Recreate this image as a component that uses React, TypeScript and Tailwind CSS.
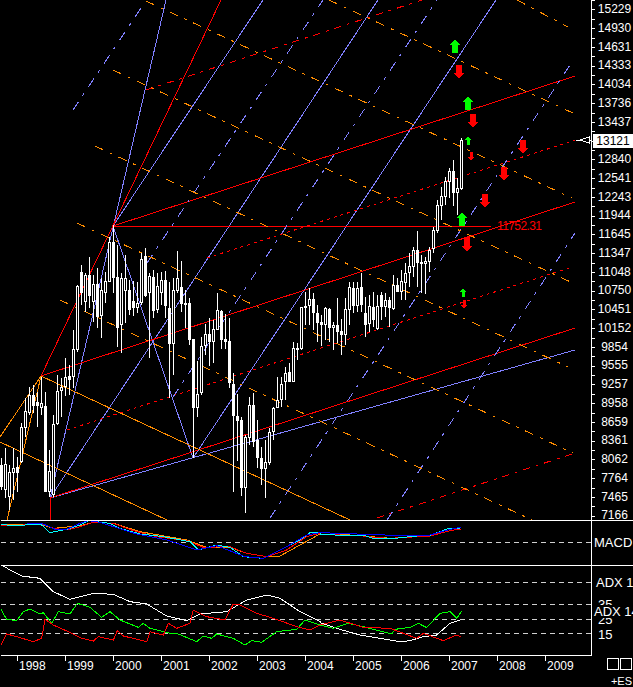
// App.tsx - monthly index chart with Gann-style fan lines, MACD and ADX panels
const ORANGE = '#ff8c00';
const BLUE = '#8080ff';
const RED = '#ff0000';
const GREEN = '#00ff00';

// [high, bodyTop, bodyBottom, low, filled]
const CANDLES: [number, number, number, number, number][] = [
    [458, 465, 487, 490, 1], [448, 464, 490, 498, 0], [465, 472, 497, 510, 0], [448, 468, 473, 500, 0],
    [457, 467, 473, 492, 1], [423, 427, 462, 463, 0], [398, 411, 428, 437, 0], [387, 395, 413, 415, 0],
    [385, 395, 406, 413, 1], [392, 402, 406, 427, 1], [377, 403, 408, 415, 0], [392, 406, 492, 492, 1],
    [450, 471, 492, 497, 0], [415, 424, 495, 497, 0], [375, 391, 424, 425, 0], [378, 387, 391, 417, 0],
    [358, 377, 387, 396, 0], [365, 376, 380, 395, 1], [330, 349, 377, 388, 0], [285, 286, 350, 352, 0],
    [265, 272, 293, 305, 1], [273, 275, 302, 312, 0], [257, 275, 296, 308, 1], [275, 284, 302, 322, 0],
    [268, 284, 317, 328, 1], [278, 290, 316, 338, 0], [272, 281, 293, 303, 0], [237, 242, 282, 282, 0],
    [225, 242, 278, 293, 1], [245, 277, 328, 347, 1], [273, 278, 325, 353, 0], [255, 278, 291, 323, 0],
    [280, 290, 310, 315, 1], [281, 301, 308, 316, 1], [282, 303, 308, 313, 0], [253, 259, 303, 305, 0],
    [248, 256, 296, 297, 1], [273, 276, 293, 358, 0], [270, 277, 311, 318, 1], [273, 286, 310, 313, 0],
    [272, 280, 293, 305, 0], [271, 280, 306, 318, 1], [282, 308, 344, 398, 1], [278, 290, 344, 375, 0],
    [251, 278, 291, 293, 0], [261, 287, 304, 312, 1], [290, 303, 305, 328, 1], [298, 303, 340, 345, 1],
    [340, 339, 408, 458, 1], [361, 394, 408, 417, 0], [337, 346, 393, 395, 0], [324, 334, 346, 355, 0],
    [318, 334, 342, 366, 1], [320, 329, 342, 363, 0], [293, 310, 330, 330, 0], [310, 311, 340, 349, 1],
    [314, 339, 342, 349, 1], [318, 341, 383, 388, 1], [373, 384, 416, 492, 1], [394, 416, 421, 461, 1],
    [417, 420, 488, 496, 1], [435, 437, 488, 513, 0], [397, 405, 438, 445, 0], [393, 405, 442, 447, 1],
    [420, 440, 458, 468, 1], [447, 458, 469, 485, 1], [440, 462, 469, 498, 0], [428, 432, 463, 465, 0],
    [407, 408, 432, 440, 0], [377, 400, 408, 408, 0], [377, 384, 400, 407, 0], [367, 373, 382, 400, 0],
    [363, 372, 382, 382, 1], [342, 348, 382, 382, 0], [343, 348, 350, 360, 1], [307, 307, 349, 350, 0],
    [292, 306, 308, 325, 0], [288, 299, 306, 325, 0], [293, 299, 313, 330, 1], [305, 313, 323, 342, 1],
    [315, 322, 325, 346, 1], [307, 308, 325, 340, 0], [308, 309, 328, 342, 1], [322, 325, 328, 350, 0],
    [298, 325, 332, 343, 1], [319, 331, 335, 355, 1], [298, 309, 335, 345, 0], [282, 287, 310, 325, 0],
    [282, 288, 306, 313, 1], [282, 288, 306, 312, 0], [273, 287, 305, 312, 1], [297, 313, 325, 337, 1],
    [295, 306, 324, 332, 0], [292, 307, 320, 327, 1], [295, 306, 329, 330, 0], [292, 295, 307, 320, 1],
    [293, 300, 307, 317, 0], [297, 300, 308, 327, 1], [275, 285, 309, 310, 0], [278, 285, 292, 292, 1],
    [270, 281, 292, 300, 0], [263, 273, 283, 300, 0], [253, 266, 273, 287, 0], [247, 250, 267, 277, 0],
    [231, 250, 263, 287, 1], [255, 262, 264, 293, 1], [257, 261, 264, 294, 0], [247, 250, 262, 272, 0],
    [227, 230, 249, 253, 0], [200, 205, 231, 233, 0], [187, 196, 206, 220, 0], [177, 181, 197, 205, 0],
    [168, 171, 182, 198, 0], [160, 171, 193, 206, 1], [178, 188, 193, 215, 0], [138, 140, 189, 190, 0],
];

const SOLID: [number, number, number, number, string][] = [
    [50, 498, 166, 0, BLUE], [50, 498, 378, 0, BLUE], [113, 226, 263, 0, BLUE], [113, 226, 193, 458, BLUE],
    [193, 458, 496, 0, BLUE], [50, 498, 575, 350, BLUE],
    [41, 376, 221, 0, RED], [50, 498, 575, 328, RED], [113, 226, 575, 76, RED], [41, 376, 575, 202, RED],
    [50, 498, 50, 520, RED], [113, 226, 491, 226, RED],
    [41, 376, 350, 520, ORANGE], [0, 442, 167, 520, ORANGE], [41, 376, 7, 520, ORANGE], [41, 376, 0, 437, ORANGE],
];

const DASHED: [number, number, number, number, string, string][] = [
    [146, 90, 422, 0, RED, '7 6 3 6'], [207, 258, 560, 145, RED, '3 4'], [560, 145, 575, 140, RED, '3 4'],
    [67, 430, 572, 267, RED, '3 4'], [377, 518, 575, 453, RED, '7 6 3 6'],
    [73, 110, 143, 5, BLUE, '10 7 3 8'], [147, 263, 323, 0, BLUE, '10 7 3 8'], [173, 397, 437, 0, BLUE, '10 7 3 8'],
    [387, 520, 575, 233, BLUE, '10 7 3 8'], [270, 518, 572, 62, BLUE, '10 7 3 8'],
    [517, 0, 568, 27, ORANGE, '9 7 3 7'], [329, 0, 575, 114, ORANGE, '9 7 3 7'], [146, 1, 572, 198, ORANGE, '9 7 3 7'],
    [113, 70, 575, 284, ORANGE, '9 7 3 7'], [95, 146, 568, 367, ORANGE, '9 7 3 7'], [77, 223, 573, 453, ORANGE, '9 7 3 7'],
    [60, 300, 532, 520, ORANGE, '9 7 3 7'],
];

// cx, top, height, up
const ARROWS: [number, number, number, boolean][] = [
    [455, 39, 14, true], [459, 65, 14, false], [468, 96, 14, true], [473, 114, 14, false],
    [468, 136, 9, true], [471, 152, 9, false], [523, 140, 14, false], [504, 167, 14, false],
    [485, 194, 14, false], [462, 212, 14, true], [467, 237, 15, false], [463, 288, 9, true], [464, 300, 9, false],
];

const PRICE_LABELS = [
    '15229', '14930', '14631', '14333', '14034', '13736', '13437', '13121', '12840', '12541', '12243', '11944', '11645', '11347',
    '11048', '10750', '10451', '10152', '9854', '9555', '9257', '8958', '8659', '8361', '8062', '7764', '7465', '7166',
];
const YEARS = ['1998', '1999', '2000', '2001', '2002', '2003', '2004', '2005', '2006', '2007', '2008', '2009'];

// curve points were read off a 3x crop, so scale them back down
const pts = (left: number[], right: number[] = []) => {
    const out: string[] = [];
    for (let i = 0; i < left.length; i += 2) out.push(`${left[i] / 3},${510 + left[i + 1] / 3}`);
    for (let i = 0; i < right.length; i += 2) out.push(`${320 + right[i] / 3},${510 + right[i + 1] / 3}`);
    return out.join(' ');
};

const MACD_LINES: [string, string][] = [
    [ORANGE, pts([0,45,100,42,130,45,160,55,240,47,280,37,340,40,420,65,560,90,620,112,690,112,740,130,800,140,840,138], [0,72,50,72,130,78,200,84])],
    [RED, pts([0,47,50,47,100,42,130,42,160,55,200,60,240,50,280,37,340,40,400,62,470,80,560,92,610,112,690,110,740,130,800,140,860,120,920,80,960,70], [0,72,60,75,130,78,170,83,210,85,260,82,330,78,390,62,422,57])],
    ['#00ffff', pts([0,43,50,48,100,42,125,45,150,68,200,58,240,45,265,32,330,40,360,55,420,72,490,80,570,95,595,120,650,105,690,112,730,140,790,145,840,120,900,90,930,68,960,67], [0,72,60,76,130,76,160,85,205,87,290,78,330,76,390,54,420,55])],
    ['#0000ff', pts([80,40,130,42,170,60,200,58,240,40,265,32,300,37,410,72,500,90,590,120,650,107,735,140,790,145,860,110,920,75,960,68], [280,78,330,75,390,58,422,52])],
];

const ADX_LINES: [string, string][] = [
    ['#ffffff', pts([5,165,30,180,65,198,120,205,160,245,210,268,280,250,340,253,390,275,440,282,500,318,560,332,600,312,680,305,740,270,800,255,840,265,900,305,960,335], [0,338,60,358,120,375,240,395,270,392,310,380,350,375,390,340,420,330])],
    [GREEN, pts([3,298,20,328,50,332,70,305,90,297,120,312,130,308,155,340,175,305,210,312,232,280,270,292,305,322,330,305,360,330,415,352,430,340,450,355,510,370,530,370,590,395,610,378,635,385,650,372,700,385,735,405,755,392,785,397,830,365,890,358,915,330,960,345], [0,345,40,355,85,340,130,350,215,372,225,358,270,352,295,340,320,353,360,310,390,305,410,325,425,303])],
    [RED, pts([3,405,20,372,50,380,100,395,125,385,135,328,160,345,220,372,240,383,280,393,295,380,340,390,352,362,370,378,440,395,450,365,490,375,505,340,530,355,570,340,580,300,620,320,675,330,700,282,720,285,770,310,820,325,890,350,930,360,960,345], [0,345,60,330,130,352,210,355,290,385,310,370,370,392,410,375,422,380])],
];

const Arrow = ({ cx, top, h, up }: { cx: number; top: number; h: number; up: boolean }) => {
    const big = h > 10;
    const head = big ? 6 : 4;
    const hw = big ? 5.5 : 3.5;
    const sw = big ? 3 : 1.5;
    const tip = up ? top : top + h;
    const dir = up ? 1 : -1;
    const base = tip + dir * head;
    const end = tip + dir * h;
    const points = [
        [cx, tip], [cx + hw, base], [cx + sw, base], [cx + sw, end], [cx - sw, end], [cx - sw, base], [cx - hw, base],
    ].map((p) => p.join(',')).join(' ');
    return <polygon points={points} fill={up ? GREEN : RED} shapeRendering="crispEdges" />;
};

const PriceChart = () => (
    <svg width={591} height={520} viewBox="0 0 591 520" className="block shrink-0" shapeRendering="crispEdges">
        {SOLID.map(([x1, y1, x2, y2, c], i) => (
            <line key={i} x1={x1} y1={y1} x2={x2} y2={y2} stroke={c} strokeWidth={1} />
        ))}
        {DASHED.map(([x1, y1, x2, y2, c, d], i) => (
            <line key={i} x1={x1} y1={y1} x2={x2} y2={y2} stroke={c} strokeWidth={1} strokeDasharray={d} />
        ))}
        {CANDLES.map(([high, top, bottom, low, filled], i) => {
            const x = i * 4;
            return (
                <g key={i}>
                    <rect x={x + 1} y={Math.min(high, top)} width={1} height={low - Math.min(high, top)} fill="#fff" />
                    <rect x={x} y={top} width={3} height={bottom - top} fill="#fff" />
                    {!filled && bottom - top > 2 && <rect x={x + 1} y={top + 1} width={1} height={bottom - top - 2} fill="#000" />}
                </g>
            );
        })}
        {ARROWS.map(([cx, top, h, up], i) => (
            <Arrow key={i} cx={cx} top={top} h={h} up={up} />
        ))}
        <text x={497} y={230} fill={RED} fontSize={12} letterSpacing={-0.6} fontFamily="'Liberation Sans', sans-serif">
            11752.31
        </text>
        {/* last price pointer */}
        <line x1={576} y1={140} x2={580} y2={140} stroke="#fff" />
        <line x1={589} y1={140} x2={591} y2={140} stroke="#fff" />
        <polygon points="580,140 589,137 589,143" fill="none" stroke="#fff" />
    </svg>
);

const PriceAxis = () => (
    <div className="flex flex-1 h-full overflow-hidden">
        <svg width={4} height={520} className="block shrink-0" shapeRendering="crispEdges">
            {Array.from({ length: 56 }, (_, i) => (
                <rect key={i} x={0} y={Math.round(i * 9.375)} width={3} height={1} fill="#fff" />
            ))}
        </svg>
        <div className="flex flex-col w-[37px]">
            {PRICE_LABELS.map((label) =>
                label === '13121' ? (
                    <div key={label} className="h-[18.75px] shrink-0 flex items-center">
                        <span className="-ml-[3px] w-[40px] h-[14px] leading-[14px] bg-white text-black text-center shrink-0">{label}</span>
                    </div>
                ) : (
                    <div key={label} className="h-[18.75px] shrink-0 leading-[18.75px] text-center">{label}</div>
                )
            )}
        </div>
    </div>
);

const MacdPanel = () => (
    <svg width={590} height={44} viewBox="1 521 590 44" className="block shrink-0" shapeRendering="crispEdges">
        <line x1={1} y1={542.5} x2={591} y2={542.5} stroke="#d0d0d0" strokeDasharray="5 4" />
        {MACD_LINES.map(([c, p]) => (
            <polyline key={c} points={p} fill="none" stroke={c} strokeWidth={1} />
        ))}
    </svg>
);

const AdxPanel = () => (
    <svg width={590} height={89} viewBox="1 566 590 89" className="block shrink-0" shapeRendering="crispEdges">
        {[582.5, 604.5, 619.5, 633.5].map((y) => (
            <line key={y} x1={1} y1={y} x2={591} y2={y} stroke="#d0d0d0" strokeDasharray="5 4" />
        ))}
        {ADX_LINES.map(([c, p]) => (
            <polyline key={c} points={p} fill="none" stroke={c} strokeWidth={1} />
        ))}
    </svg>
);

export default function App() {
    return (
        <div className="w-[633px] h-[687px] bg-black text-white text-[12px] flex flex-col overflow-hidden font-['Liberation_Sans',sans-serif]">
            {/* main chart */}
            <div className="flex h-[520px] shrink-0">
                <PriceChart />
                <div className="flex flex-1 border-l border-white overflow-hidden">
                    <PriceAxis />
                </div>
            </div>

            {/* MACD */}
            <div className="flex h-[45px] shrink-0 ml-px border-t border-white">
                <MacdPanel />
                <div className="flex-1 border-l border-white pl-[2px] text-[13px] leading-[43px] whitespace-nowrap overflow-hidden">MACD</div>
            </div>

            {/* ADX */}
            <div className="flex h-[90px] shrink-0 ml-px border-t border-white">
                <AdxPanel />
                <div className="relative flex-1 border-l border-white overflow-hidden flex flex-col pl-[4px] text-[13px]">
                    <div className="h-[15px] mt-[9px] leading-[15px] whitespace-nowrap">ADX 14</div>
                    <div className="h-[15px] mt-[7px] leading-[15px] pl-[2px]">35</div>
                    <div className="h-[15px] leading-[15px] pl-[2px]">25</div>
                    <div className="h-[15px] leading-[15px] pl-[2px]">15</div>
                    <div className="absolute left-[2px] top-[39px] h-[13px] leading-[13px] bg-black whitespace-nowrap">ADX 14</div>
                </div>
            </div>

            {/* time axis */}
            <div className="flex flex-1">
                <div className="w-[591px] ml-px shrink-0 border-t border-white flex pl-[16px]">
                    {YEARS.map((year) => (
                        <div key={year} className="w-[48px] shrink-0 flex">
                            <div className="w-px h-[5px] bg-white" />
                            <span className="pl-px pt-[3px] leading-[14px]">{year}</span>
                        </div>
                    ))}
                </div>
                <div className="flex-1 flex flex-col items-end pr-[1px]">
                    <div className="flex gap-[1px] pt-[3px]">
                        <div className="w-[12px] h-[12px] border border-white" />
                        <div className="w-[12px] h-[12px] border border-white" />
                    </div>
                    <div className="mt-[5px] text-[11px] leading-[12px]">+ES</div>
                </div>
            </div>
        </div>
    );
}
